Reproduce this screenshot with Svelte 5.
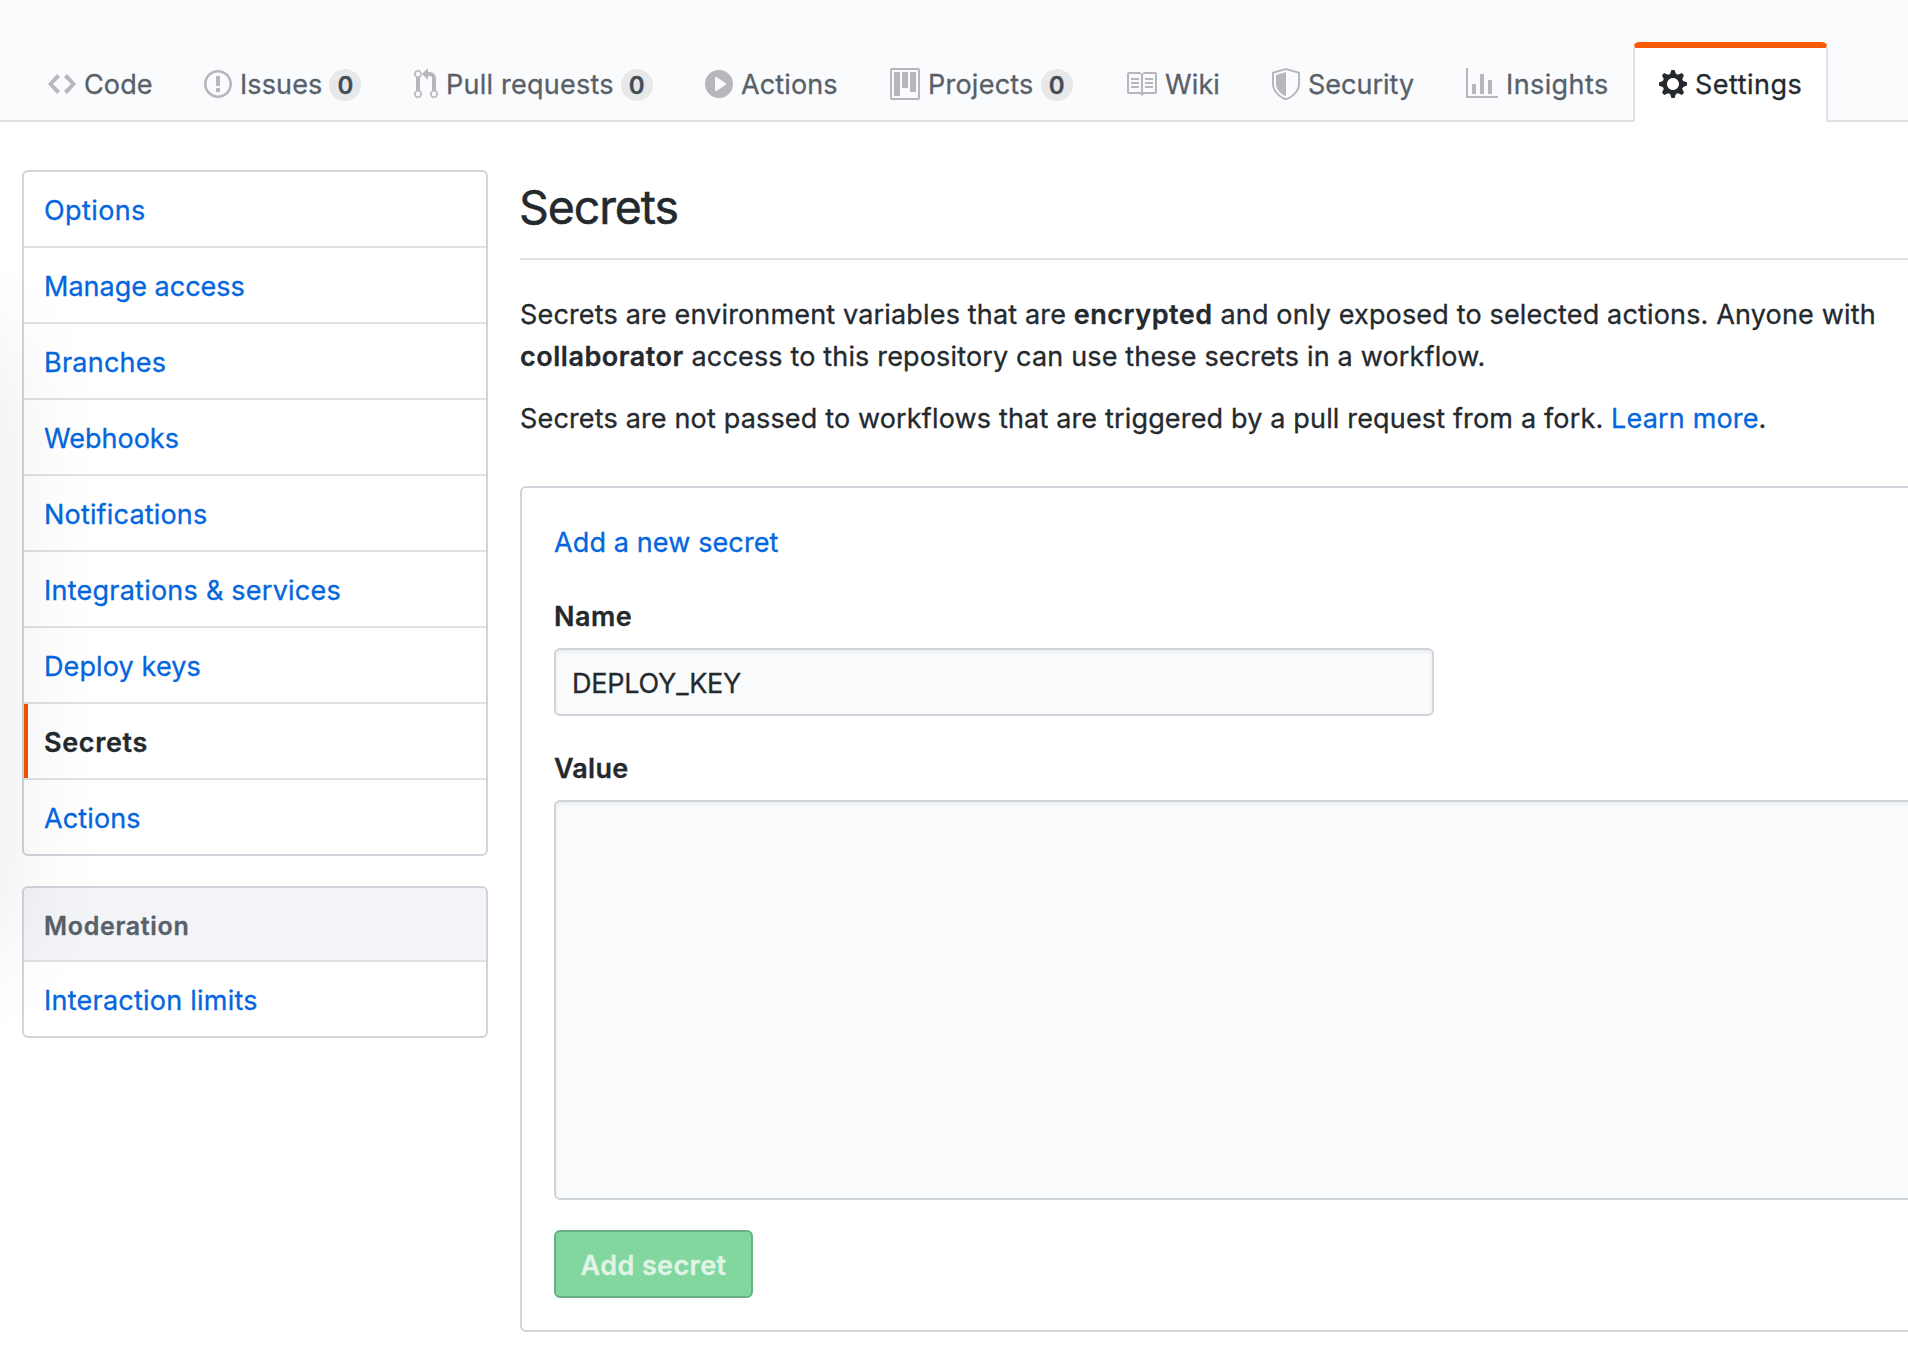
<script>
  const tabs = [
    { id: 'code', label: 'Code', track: 't1', w: 14, d: 'M9.5 3L8 4.5 11.5 8 8 11.5 9.5 13 14 8 9.5 3zm-5 0L0 8l4.5 5L6 11.5 2.5 8 6 4.5 4.5 3z' },
    { id: 'issues', label: 'Issues', track: 't1', count: 0, w: 14, d: 'M7 2.3c3.14 0 5.7 2.56 5.7 5.7s-2.56 5.7-5.7 5.7A5.71 5.71 0 011.3 8c0-3.14 2.56-5.7 5.7-5.7zM7 1C3.14 1 0 4.14 0 8s3.14 7 7 7 7-3.14 7-7-3.14-7-7-7zm1 3H6v5h2V4zm0 6H6v2h2v-2z' },
    { id: 'pulls', label: 'Pull requests', track: 't2', count: 0, w: 12, d: 'M11 11.28V5c-.03-.78-.34-1.47-.94-2.06C9.46 2.35 8.78 2.03 8 2H7V0L4 3l3 3V4h1c.27.02.48.11.69.31.21.2.3.42.31.69v6.28A1.993 1.993 0 0010 15a1.993 1.993 0 001-3.72zm-1 2.92c-.66 0-1.2-.55-1.2-1.2 0-.65.55-1.2 1.2-1.2.65 0 1.2.55 1.2 1.2 0 .65-.55 1.2-1.2 1.2zM4 3c0-1.11-.89-2-2-2a1.993 1.993 0 00-1 3.72v6.56A1.993 1.993 0 002 15a1.993 1.993 0 001-3.72V4.72c.59-.34 1-.98 1-1.72zm-.8 10c0 .66-.55 1.2-1.2 1.2-.65 0-1.2-.55-1.2-1.2 0-.65.55-1.2 1.2-1.2.65 0 1.2.55 1.2 1.2zM2 4.2C1.34 4.2.8 3.65.8 3c0-.65.55-1.2 1.2-1.2.65 0 1.2.55 1.2 1.2 0 .65-.55 1.2-1.2 1.2z' },
    { id: 'actions', label: 'Actions', track: 't1', w: 14, d: 'M14 8A7 7 0 110 8a7 7 0 0114 0zm-8.223 3.482l4.599-3.066a.5.5 0 000-.832L5.777 4.518A.5.5 0 005 4.934v6.132a.5.5 0 00.777.416z' },
    { id: 'projects', label: 'Projects', track: 't2', count: 0, w: 15, d: 'M10 12h3V2h-3v10zm-4-2h3V2H6v8zm-4 4h3V2H2v12zm-1 1h13V1H1v14zM14 0H1a1 1 0 00-1 1v14a1 1 0 001 1h13a1 1 0 001-1V1a1 1 0 00-1-1z' },
    { id: 'wiki', label: 'Wiki', track: 't1', w: 16, d: 'M3 5h4v1H3V5zm0 3h4V7H3v1zm0 2h4V9H3v1zm11-5h-4v1h4V5zm0 2h-4v1h4V7zm0 2h-4v1h4V9zm2-6v9c0 .55-.45 1-1 1H9.5l-1 1-1-1H2c-.55 0-1-.45-1-1V3c0-.55.45-1 1-1h5.5l1 1 1-1H15c.55 0 1 .45 1 1zm-8 .5L7.5 3H2v9h6V3.5zm7-.5H9.5l-.5.5V12h6V3z' },
    { id: 'security', label: 'Security', track: 't0', w: 14, d: 'M0 2l7-2 7 2v6.02C14 12.69 8.69 16 7 16c-1.69 0-7-3.31-7-7.98V2zm1 .75L7 1l6 1.75v5.268C13 12.104 8.449 15 7 15c-1.449 0-6-2.896-6-6.982V2.75zm1 .75L7 2v12c-1.207 0-5-2.482-5-5.985V3.5z' },
    { id: 'insights', label: 'Insights', track: 't3', w: 16, d: 'M16 14v1H0V0h1v14h15zM5 13H3V8h2v5zm4 0H7V3h2v10zm4 0h-2V6h2v7z' },
    { id: 'settings', label: 'Settings', track: 't4', w: 14, active: true, d: 'M14 8.77v-1.6l-1.94-.64-.45-1.09.88-1.84-1.13-1.13-1.81.91-1.09-.45-.69-1.92h-1.6l-.63 1.94-1.11.45-1.84-.88-1.13 1.13.91 1.81-.45 1.09L0 7.23v1.59l1.94.64.45 1.09-.88 1.84 1.13 1.13 1.81-.91 1.09.45.69 1.92h1.59l.63-1.94 1.11-.45 1.84.88 1.13-1.13-.92-1.81.47-1.09L14 8.75v.02zM7 11c-1.66 0-3-1.34-3-3s1.34-3 3-3 3 1.34 3 3-1.34 3-3 3z' }
  ];

  const menu = [
    { label: 'Options', track: 't3' },
    { label: 'Manage access', track: 't0' },
    { label: 'Branches', track: 't2' },
    { label: 'Webhooks', track: 't0' },
    { label: 'Notifications', track: 't15' },
    { label: 'Integrations & services', track: 't2' },
    { label: 'Deploy keys', track: 't1' },
    { label: 'Secrets', track: 't5', active: true },
    { label: 'Actions', track: 't1' }
  ];

  let name = $state('DEPLOY_KEY');
  let value = $state('');
</script>

<div class="page">
  <nav class="tabs">
    {#each tabs as tab}
      <a class="tab {tab.id} {tab.track}" class:active={tab.active} href="#{tab.id}">
        <svg width={tab.w * 2} height="32" viewBox="0 0 {tab.w} 16" fill-rule="evenodd" aria-hidden="true"><path d={tab.d} /></svg>
        <span class="label">{tab.label}</span>
        {#if tab.count !== undefined}<span class="counter">{tab.count}</span>{/if}
      </a>
    {/each}
  </nav>

  <div class="body">
    <aside class="side">
      <div class="menu">
        {#each menu as item}
          <a class="item {item.track}" class:selected={item.active} href="#menu">{item.label}</a>
        {/each}
      </div>
      <div class="menu">
        <div class="heading">Moderation</div>
        <a class="item t2" href="#limits">Interaction limits</a>
      </div>
    </aside>

    <main class="content">
      <h1>Secrets</h1>
      <p class="intro">
        Secrets are environment variables that are <strong>encrypted</strong> and only exposed to selected actions. Anyone with
        <strong>collaborator</strong> access to this repository can use these secrets in a workflow.
      </p>
      <p class="note">
        Secrets are not passed to workflows that are triggered by a pull request from a fork. <a href="#learn">Learn more</a>.
      </p>

      <form class="box">
        <a class="add" href="#new">Add a new secret</a>
        <label class="name-label" for="name">Name</label>
        <input id="name" type="text" bind:value={name} />
        <label class="value-label" for="value">Value</label>
        <textarea id="value" bind:value></textarea>
        <button type="button" disabled>Add secret</button>
      </form>
    </main>
  </div>
  <div class="edge-shadow"></div>
</div>

<style>
  :global(body) { margin: 0; overflow: hidden; background: #fff; }
  .page, .page * { box-sizing: border-box; }
  .page {
    position: relative;
    width: 100%;
    height: 1370px;
    overflow: hidden;
    font: 400 27px/42px Inter, "Liberation Sans", sans-serif;
    color: #24292e;
    background: #fff;
    -webkit-text-stroke: 0.3px;
  }
  a { color: #0366de; text-decoration: none; }

  .t0 { letter-spacing: 0; }
  .t1 { letter-spacing: 0.12px; }
  .t15 { letter-spacing: 0.18px; }
  .t2 { letter-spacing: 0.24px; }
  .t3 { letter-spacing: 0.4px; }
  .t4 { letter-spacing: 0.5px; }
  .t5 { letter-spacing: 0.65px; }

  .tabs {
    display: flex;
    align-items: flex-end;
    height: 122px;
    padding-left: 22px;
    background: #fafbfd;
    box-shadow: inset 0 -2px #dfe3e8;
  }
  .tab {
    display: flex;
    flex: none;
    align-items: center;
    gap: 8px;
    height: 80px;
    padding: 6px 0 2px 26px;
    color: #586069;
    white-space: nowrap;
  }
  .tab svg { flex: none; fill: #b5b7ba; }
  .label { padding-top: 2px; }
  .code { width: 156px; }
  .issues { width: 210px; }
  .pulls { width: 291px; }
  .actions { width: 185px; }
  .projects { width: 235px; }
  .wiki { width: 147px; }
  .security { width: 194px; }
  .insights { width: 193px; }
  .settings { width: 195px; }
  .tab.active {
    padding: 0 0 2px 24px;
    color: #24292e;
    background: #fff;
    border: solid #dfe3e8;
    border-width: 6px 2px 0;
    border-top-color: #fb5a00;
    border-radius: 6px 6px 0 0;
  }
  .tab.active svg { fill: #24292e; }
  .counter {
    width: 32px;
    height: 32px;
    margin: 2px 0 0 -1px;
    padding-top: 1px;
    border-radius: 16px;
    background: #e6e8ea;
    color: #444d56;
    font-size: 24px;
    font-weight: 600;
    line-height: 32px;
    letter-spacing: 0;
    text-align: center;
  }

  .body { display: flex; gap: 32px; padding: 48px 0 0 22px; }
  .side { flex: none; width: 466px; }
  .menu {
    margin-bottom: 30px;
    overflow: hidden;
    border: 2px solid #cfd4da;
    border-radius: 6px;
  }
  .item {
    display: block;
    height: 76px;
    padding: 2px 0 0 20px;
    line-height: 74px;
    border-bottom: 2px solid #dfe3e8;
  }
  .item:last-child { height: 74px; border-bottom: 0; }
  .item.selected {
    color: #24292e;
    font-weight: 600;
    background: linear-gradient(#f15400, #f15400) no-repeat 0 0 / 4px 100%;
  }
  .heading {
    height: 74px;
    padding: 1px 0 0 20px;
    font-size: 25px;
    font-weight: 600;
    line-height: 74px;
    letter-spacing: 0.68px;
    color: #586069;
    background: #f3f4f8;
    border-bottom: 2px solid #dfe3e8;
  }

  .content { flex: none; width: 1460px; }
  h1 {
    height: 90px;
    margin: 0;
    font-size: 46.5px;
    font-weight: 400;
    line-height: 74px;
    letter-spacing: -1.1px;
    text-indent: -1px;
    border-bottom: 2px solid #dfe3e8;
    -webkit-text-stroke: 0.5px;
  }
  p { margin: 0; letter-spacing: 0.16px; }
  strong { font-weight: 600; letter-spacing: 0.52px; }
  .intro { margin-top: 34px; }
  .note { margin-top: 20px; }
  .box {
    margin-top: 46px;
    padding: 34px 32px 32px;
    border: 2px solid #cfd4da;
    border-radius: 6px;
  }
  .add, label, input, textarea, button { display: block; }
  .add { letter-spacing: 0.12px; }
  label { margin-bottom: 10px; font-weight: 600; }
  .name-label { margin-top: 32px; letter-spacing: 0.5px; }
  .value-label { margin-top: 32px; letter-spacing: 0.25px; }
  input, textarea {
    margin: 0;
    padding: 2px 16px 0;
    font: inherit;
    color: #24292e;
    background: #fafbfd;
    border: 2px solid #cfd4da;
    border-radius: 6px;
    outline: none;
    resize: none;
    box-shadow: inset 0 2px 4px rgba(27, 31, 35, 0.08);
  }
  input { width: 880px; height: 68px; letter-spacing: -0.23px; }
  textarea { width: 100%; height: 400px; }
  button {
    width: 199px;
    height: 68px;
    margin: 30px 0 0;
    padding: 3px 0 0;
    font: 600 27px/61px Inter, "Liberation Sans", sans-serif;
    letter-spacing: 0.4px;
    color: #e0f4e6;
    background: #82d79f;
    border: 2px solid #69b185;
    border-radius: 6px;
  }

  .edge-shadow {
    position: absolute;
    top: 345px;
    left: -200px;
    width: 200px;
    height: 605px;
    box-shadow: 0 0 110px rgba(0, 0, 0, 0.095);
    pointer-events: none;
  }
</style>
